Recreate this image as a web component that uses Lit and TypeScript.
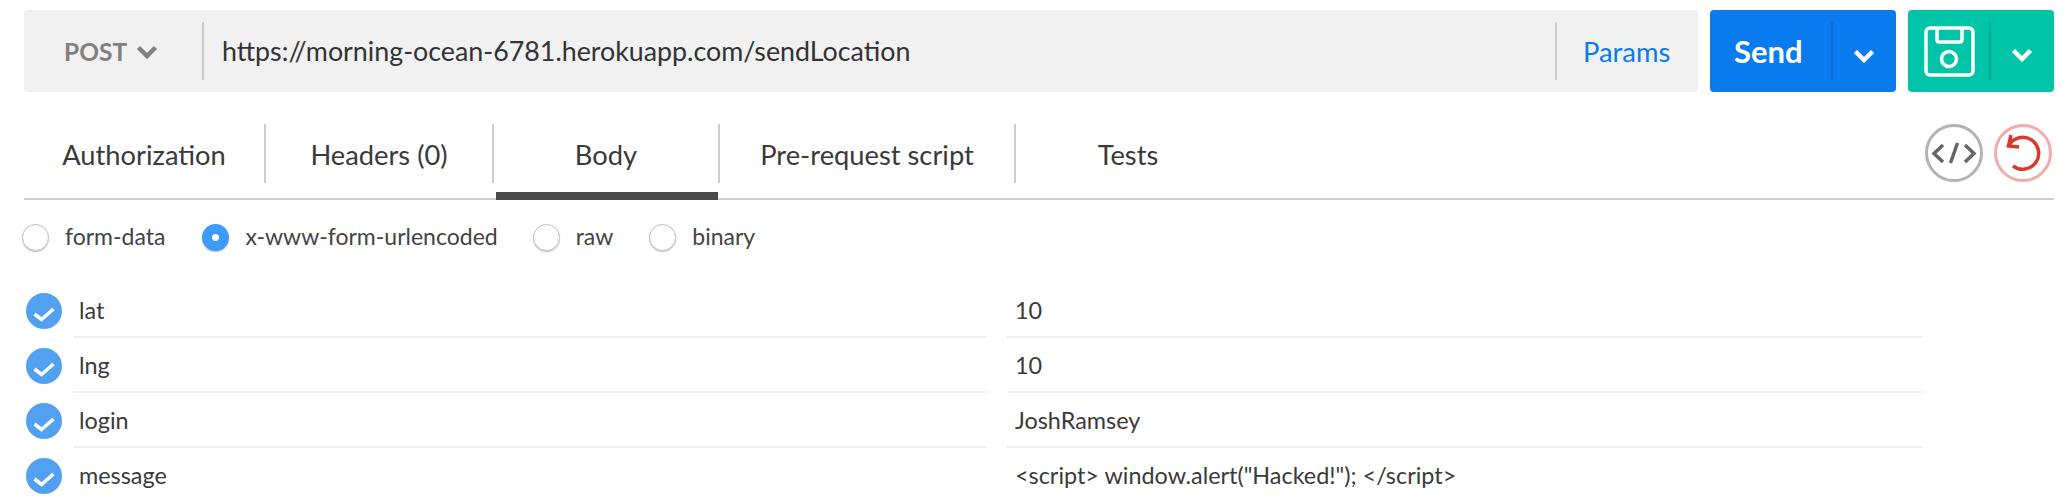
import { LitElement, css, html } from "lit";
import { customElement } from "lit/decorators.js";

const chevron = (w: number, h: number) => html`
  <svg class="chev" width=${w} height=${h} viewBox="0 0 22 14">
    <polyline points="2.5,2.5 11,11 19.5,2.5" fill="none" stroke="currentColor" stroke-width="4.5"></polyline>
  </svg>`;

const rows = [
  { key: "lat", value: "10" },
  { key: "lng", value: "10" },
  { key: "login", value: "JoshRamsey" },
  { key: "message", value: '<script> window.alert("Hacked!"); </script>' },
];

@customElement("app-root")
export class AppRoot extends LitElement {
  static styles = css`
    :host {
      display: block;
      width: 2068px;
      height: 496px;
      overflow: hidden;
      background: #fff;
      font-family: Lato, "Liberation Sans", sans-serif;
      color: #333;
    }
    .top {
      display: flex;
      gap: 12px;
      padding: 10px 14px 0 24px;
      height: 82px;
    }
    .bar {
      flex: 1;
      display: flex;
      align-items: center;
      background: #f1f1f1;
      border-radius: 4px;
    }
    .method {
      width: 180px;
      height: 58px;
      box-sizing: border-box;
      padding-left: 40px;
      display: flex;
      align-items: center;
      gap: 9px;
      border-right: 2px solid #ccc;
      color: #808080;
      font-size: 24.5px;
      font-weight: 700;
    }
    .method .chev {
      margin-top: 2px;
    }
    .url {
      flex: 1;
      padding-left: 18px;
      font-size: 26.8px;
      color: #333;
    }
    .params {
      width: 143px;
      height: 58px;
      box-sizing: border-box;
      padding-left: 26px;
      display: flex;
      align-items: center;
      border-left: 2px solid #ccc;
      color: #0a7bed;
      font-size: 27.4px;
    }
    .btn {
      display: flex;
      align-items: center;
      border-radius: 4px;
      color: #fff;
    }
    .send {
      width: 186px;
      background: #097bee;
    }
    .send .label {
      width: 123px;
      height: 58px;
      box-sizing: border-box;
      padding-left: 24px;
      display: flex;
      align-items: center;
      border-right: 2px solid #0a6ccf;
      font-size: 31px;
      font-weight: 700;
    }
    .send .chev {
      margin: 10px 0 0 20px;
    }
    .save {
      width: 146px;
      background: #00c4a7;
    }
    .save .floppy {
      width: 83px;
      height: 58px;
      box-sizing: border-box;
      padding-left: 16px;
      display: flex;
      align-items: center;
      border-right: 2px solid #09ab93;
    }
    .save .chev {
      margin: 8px 0 0 20px;
    }
    .tabs {
      display: flex;
      align-items: flex-start;
      margin: 32px 14px 0 24px;
      height: 74px;
      border-bottom: 2px solid #ccc;
    }
    .tab {
      position: relative;
      height: 59px;
      display: flex;
      align-items: center;
      justify-content: center;
      box-sizing: border-box;
      padding-top: 2px;
      font-size: 27.3px;
      color: #3a3a3a;
    }
    .tab + .tab {
      border-left: 2px solid #ccc;
    }
    .tab.active::after {
      content: "";
      position: absolute;
      left: 2px;
      right: 0;
      bottom: -17px;
      height: 8px;
      background: #4a4a4a;
    }
    .tools {
      margin-left: auto;
      margin-right: 2px;
      display: flex;
      gap: 11px;
    }
    .modes {
      display: flex;
      align-items: center;
      padding: 24px 0 0 22px;
      height: 27px;
      font-size: 23px;
      color: #444;
    }
    .radio {
      width: 27px;
      height: 27px;
      box-sizing: border-box;
      border-radius: 50%;
      border: 1px solid #bbb;
      box-shadow: 0 1px 1px #bbb;
      display: flex;
      align-items: center;
      justify-content: center;
      margin-right: 16px;
    }
    .radio.on {
      border: none;
      background: #3e9bfd;
    }
    .radio.on::after {
      content: "";
      width: 7px;
      height: 7px;
      border-radius: 50%;
      background: #fff;
    }
    .mode {
      display: flex;
      align-items: center;
      margin-right: 36px;
    }
    .mode:first-child {
      margin-right: 37px;
    }
    .mode:nth-child(2) {
      margin-right: 35px;
    }
    .mode span.text {
      margin-top: -3px;
    }
    .rows {
      margin-top: 32px;
      font-size: 23.4px;
      color: #3a3a3a;
    }
    .row {
      display: grid;
      grid-template-columns: 36px 925px 936px;
      padding-left: 26px;
      height: 55px;
      align-items: center;
    }
    .row .check {
      display: block;
    }
    .cell {
      height: 55px;
      box-sizing: border-box;
      display: flex;
      align-items: center;
      padding-left: 6px;
      margin-left: 11px;
      border-bottom: 2px solid #f0f0f0;
    }
    .cell.val {
      margin-left: 20px;
      padding-left: 8px;
    }
    .row:last-child .cell {
      border-bottom: none;
      padding-bottom: 2px;
    }
  `;

  render() {
    return html`
      <div class="top">
        <div class="bar">
          <div class="method">POST ${chevron(22, 14)}</div>
          <div class="url">https://morning-ocean-6781.herokuapp.com/sendLocation</div>
          <div class="params">Params</div>
        </div>
        <div class="btn send">
          <div class="label">Send</div>
          ${chevron(22, 14)}
        </div>
        <div class="btn save">
          <div class="floppy">
            <svg width="51" height="51" viewBox="0 0 51 51" fill="none" stroke="#fff" stroke-width="3.5">
              <rect x="2" y="2" width="47" height="47" rx="4"></rect>
              <path d="M13 2v12a2 2 0 0 0 2 2h21a2 2 0 0 0 2-2V2"></path>
              <circle cx="25" cy="33" r="7.5"></circle>
            </svg>
          </div>
          ${chevron(22, 14)}
        </div>
      </div>

      <div class="tabs">
        <div class="tab" style="width:240px">Authorization</div>
        <div class="tab" style="width:228px">Headers (0)</div>
        <div class="tab active" style="width:226px">Body</div>
        <div class="tab" style="width:296px">Pre-request script</div>
        <div class="tab" style="width:226px">Tests</div>
        <div class="tools">
          <svg width="58" height="58" viewBox="0 0 58 58" fill="none">
            <circle cx="29" cy="29" r="27.5" stroke="#b3b3b3" stroke-width="3"></circle>
            <g stroke="#666" stroke-width="3.5">
              <polyline points="18,21 9,29.5 18,38"></polyline>
              <line x1="32.5" y1="19" x2="25.5" y2="39"></line>
              <polyline points="40,21 49,29.5 40,38"></polyline>
            </g>
          </svg>
          <svg width="58" height="58" viewBox="0 0 58 58" fill="none">
            <circle cx="29" cy="29" r="27.5" stroke="#f0abab" stroke-width="3"></circle>
            <g stroke="#d93a2b" stroke-width="3.5">
              <path d="M15 21A16 16 0 1 1 19 42"></path>
              <polyline points="17,11 14.500,22 25,23"></polyline>
            </g>
          </svg>
        </div>
      </div>

      <div class="modes">
        <div class="mode"><span class="radio"></span><span class="text">form-data</span></div>
        <div class="mode"><span class="radio on"></span><span class="text">x-www-form-urlencoded</span></div>
        <div class="mode"><span class="radio"></span><span class="text">raw</span></div>
        <div class="mode"><span class="radio"></span><span class="text">binary</span></div>
      </div>

      <div class="rows">
        ${rows.map(
          (r) => html`
            <div class="row">
              <svg class="check" width="36" height="36" viewBox="0 0 36 36">
                <circle cx="18" cy="18" r="18" fill="#52a1f0"></circle>
                <polyline points="8.500,21 15.500,26.500 27.500,16" fill="none" stroke="#fff" stroke-width="3.5"></polyline>
              </svg>
              <div class="cell">${r.key}</div>
              <div class="cell val">${r.value}</div>
            </div>
          `
        )}
      </div>
    `;
  }
}
